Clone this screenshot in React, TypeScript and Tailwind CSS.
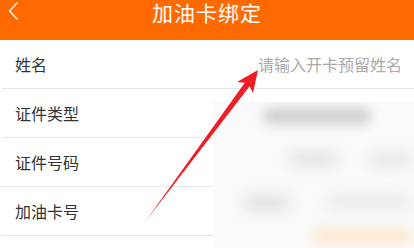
const rows = [
  { label: '姓名', placeholder: '请输入开卡预留姓名' },
  { label: '证件类型', placeholder: '' },
  { label: '证件号码', placeholder: '' },
  { label: '加油卡号', placeholder: '' },
]

export default function App() {
  return (
    <div
      className="relative w-[414px] h-[248px] overflow-hidden bg-white"
      style={{ fontFamily: '"Noto Sans CJK SC", "Noto Sans", sans-serif' }}
    >
      {/* 顶栏 */}
      <header className="h-[40px] bg-[#ff6a00] flex items-start px-[8px]">
        <svg width="12" height="22" viewBox="0 0 12 22" className="mt-[1px] shrink-0">
          <polyline points="9.5,1.5 1.5,10 9.5,18.5" fill="none" stroke="#fff" strokeWidth="1.3" />
        </svg>
        <h1 className="flex-1 text-center text-white text-[21px] leading-[24px] tracking-[1px] pr-[12px]">加油卡绑定</h1>
      </header>

      {/* 表单 */}
      <main>
        {rows.map((r) => (
          <div
            key={r.label}
            className="h-[49px] border-b border-[#e6e6e6] ml-[2px] pl-[13px] pr-[12px] flex items-center justify-between"
          >
            <span className="text-[16px] text-[#333]">{r.label}</span>
            {r.placeholder && <span className="text-[16px] text-[#aaa]">{r.placeholder}</span>}
          </div>
        ))}
      </main>

      {/* 模糊遮罩 */}
      <div className="absolute left-[213px] top-[102px] right-0 bottom-0 bg-[#fafafa] overflow-hidden flex flex-col pt-[6px] gap-[27px]">
        <div className="flex pl-[50px]">
          <div className="w-[108px] h-[16px] rounded-full bg-[#cecece] blur-[6px]" />
        </div>
        <div className="flex pl-[76px] gap-[32px]">
          <div className="w-[48px] h-[16px] rounded-full bg-[#e4e4e4] blur-[7px]" />
          <div className="w-[44px] h-[16px] rounded-full bg-[#e8e8e8] blur-[7px]" />
        </div>
        <div className="flex pl-[30px] gap-[36px]">
          <div className="w-[48px] h-[18px] rounded-full bg-[#e4e4e4] blur-[7px]" />
          <div className="w-[84px] h-[16px] rounded-full bg-[#ebebeb] blur-[7px]" />
        </div>
        <div className="flex pl-[100px] mt-[-10px]">
          <div className="w-[100px] h-[14px] rounded-full bg-[#fde6cc] blur-[6px]" />
        </div>
      </div>

      {/* 红色箭头 */}
      <svg className="absolute inset-0 pointer-events-none" width="414" height="248" viewBox="0 0 414 248">
        <polygon points="145,222 244.8,82.7 237,82 258,70 253,93 249.6,86.3" fill="#ee1c24" />
      </svg>
    </div>
  )
}
